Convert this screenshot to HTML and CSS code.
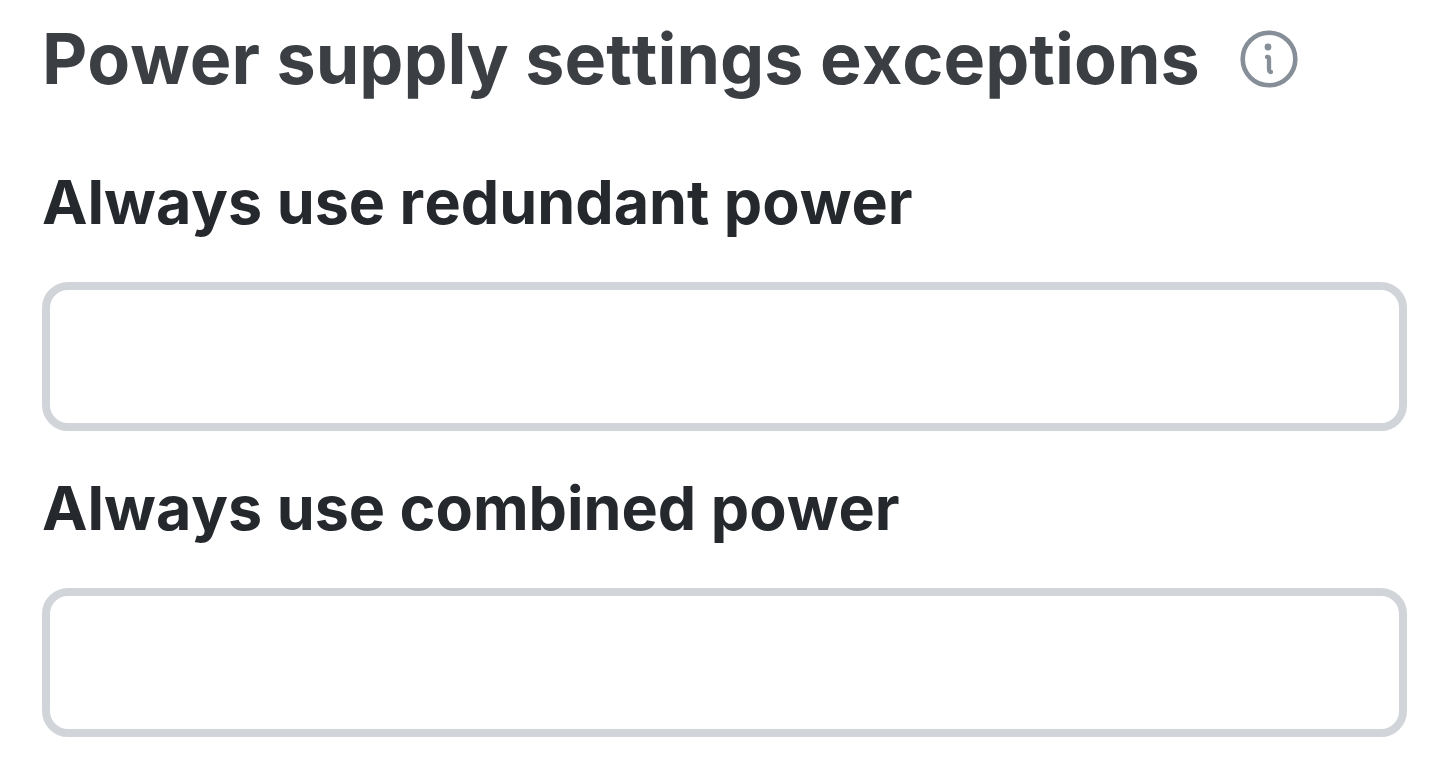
FILE: index.html
```html
<!DOCTYPE html>
<html lang="en">
<head>
<meta charset="utf-8">
<title>Power supply settings exceptions</title>
<link rel="stylesheet" href="styles.css">
</head>
<body>
<main class="panel">
  <header class="panel-header">
    <h1 class="panel-title">Power supply settings exceptions</h1>
    <button class="info-button" type="button" aria-label="More information">
      <svg class="info-icon" viewBox="0 0 58 58" aria-hidden="true">
        <circle cx="29" cy="29" r="26.3" fill="none" stroke="currentColor" stroke-width="4.6"/>
        <circle cx="28" cy="17" r="3.4" fill="currentColor"/>
        <path d="M27 27H27.5Q29 27 29 29V39Q29 42 31 42" fill="none" stroke="currentColor" stroke-width="4.3" stroke-linecap="round"/>
      </svg>
    </button>
  </header>
  <form class="exceptions">
    <div class="field">
      <label class="field-label" for="redundant">Always use redundant power</label>
      <input class="field-input" id="redundant" type="text">
    </div>
    <div class="field">
      <label class="field-label" for="combined">Always use combined power</label>
      <input class="field-input" id="combined" type="text">
    </div>
  </form>
</main>
</body>
</html>
```
FILE: styles.css
```css
* {
  box-sizing: border-box;
}

body {
  margin: 0;
  background: #fff;
  font-family: Inter, "Liberation Sans", sans-serif;
  font-kerning: none;
}

.panel {
  padding: 15px 43px 28px 42px;
}

.panel-header {
  display: flex;
  align-items: center;
  gap: 40px;
}

.panel-title {
  margin: 0;
  color: #3b3e43;
  font-size: 70px;
  font-weight: 700;
  line-height: 88px;
  white-space: nowrap;
}

.info-button {
  display: flex;
  padding: 0;
  border: 0;
  background: none;
  color: #868e98;
  cursor: pointer;
}

.info-icon {
  width: 58px;
  height: 58px;
}

.exceptions {
  display: grid;
  gap: 38px;
  margin-top: 60px;
}

.field {
  display: grid;
  gap: 41px;
}

.field-label {
  color: #25282d;
  font-size: 61px;
  font-weight: 700;
  line-height: 78px;
}

.field-input {
  width: 100%;
  height: 149px;
  padding: 0 32px;
  border: 8px solid #d1d5da;
  border-radius: 26px;
  background: #fff;
  color: #25282d;
  font: inherit;
  font-size: 60px;
}
```
